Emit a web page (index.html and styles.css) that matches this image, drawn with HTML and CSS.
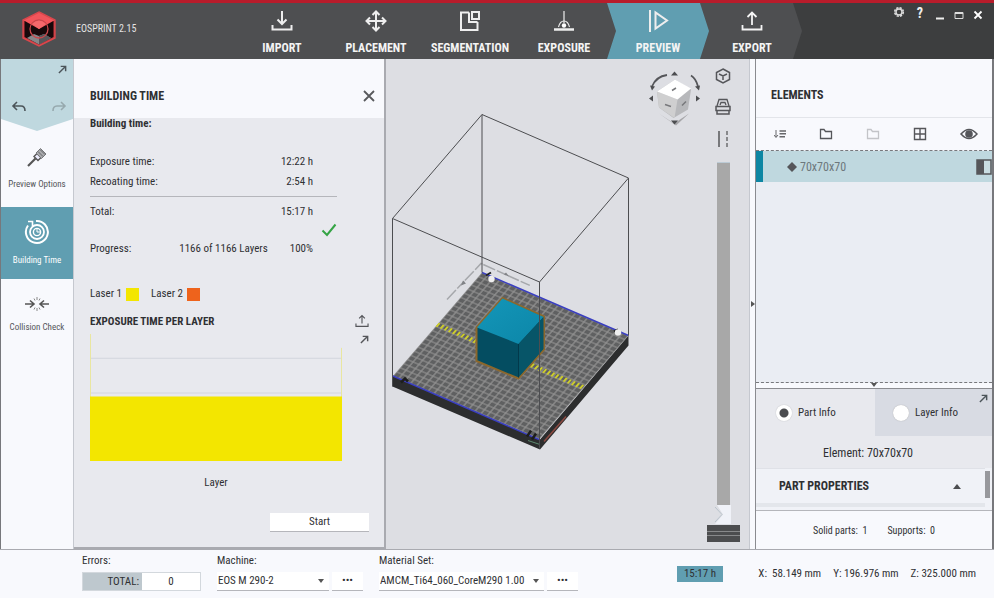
FILE: index.html
```html
<!DOCTYPE html>
<html lang="en">
<head>
<meta charset="utf-8">
<meta name="viewport" content="width=device-width, initial-scale=1">
<title>EOSPRINT 2.15</title>
<link rel="stylesheet" href="styles.css">
</head>
<body>
<svg class="defs" width="0" height="0" aria-hidden="true">
  <symbol id="pop" viewBox="0 0 10 10"><path d="M1 9 8 2M3 1.500H8.500V7" fill="none" stroke="currentColor" stroke-width="1.600"/></symbol>
  <symbol id="folder" viewBox="0 0 14 12"><path d="M1.500 10.500V1.500H5L6.500 3.500H12.500V10.500Z" fill="none" stroke="currentColor" stroke-width="1.300"/></symbol>
  <symbol id="upload" viewBox="0 0 22 22"><path d="M11 15V3M6.500 7 11 2.500 15.500 7M1.500 15V19.500H20.500V15" fill="none" stroke="currentColor" stroke-width="1.800"/></symbol>
</svg>
<div class="app">
  <header class="topbar">
    <div class="workflow">
      <div class="brand">
        <svg width="34" height="36" viewBox="0 0 34 36" aria-hidden="true">
          <path d="M17 1 33 9V27L17 35 1 27V9Z" fill="#c93a40"/>
          <path d="M2.500 10 31.500 10V26L17 33.500 2.500 26Z" fill="#17090b"/>
          <path d="M17 1 33 9 17 18 1 9Z" fill="#f2555b"/>
          <path d="M5 27 12 23 17 25 22 23 29 27 17 33.500Z" fill="#85878a"/>
          <path d="M17 25 22 23 29 27 17 33.500Z" fill="#55565a"/>
          <circle cx="17" cy="18" r="9" fill="none" stroke="#c9474c" stroke-width="1.300"/>
          <path d="M10 13Q17 6 24 13L17 18Z" fill="#f4686c"/>
          <path d="M17 1 33 9V27L17 35 1 27V9Z" fill="none" stroke="#d8474c" stroke-width="1.400"/>
        </svg>
        <span>EOSPRINT 2.15</span>
      </div>
      <nav class="steps">
        <a href="#import"><svg viewBox="0 0 22 22"><path d="M11 1V14M6.500 9.500 11 14 15.500 9.500M1.500 15V19.500H20.500V15"/></svg>IMPORT</a>
        <a href="#placement"><svg viewBox="0 0 22 22"><path d="M11 2V20M2 11H20M7.500 5 11 1.500 14.500 5M7.500 17 11 20.500 14.500 17M5 7.500 1.500 11 5 14.500M17 7.500 20.500 11 17 14.500"/></svg>PLACEMENT</a>
        <a href="#segmentation"><svg viewBox="0 0 22 22"><path d="M10 2.500H2V20H18.500V12M10 2.500V12H18.500M13 2H20V9H13Z"/></svg>SEGMENTATION</a>
        <a href="#exposure"><svg viewBox="0 0 22 22"><path d="M11 1V13" stroke-width="1.200"/><path d="M1 19.500H21" stroke-width="2.400"/><path d="M5.500 17Q7 11 11 11T16.500 17" stroke-width="1.100"/><circle cx="11" cy="15.500" r="2.200" fill="#fff" stroke="none"/></svg>EXPOSURE</a>
        <a href="#preview" class="active" aria-current="step"><svg viewBox="0 0 22 22"><path d="M3 0V22M8.500 2.500V18.500L20 10.500Z"/></svg>PREVIEW</a>
        <a href="#export"><svg><use href="#upload"/></svg>EXPORT</a>
      </nav>
    </div>
    <div class="window-controls">
      <button type="button" aria-label="Settings"><svg width="12" height="12" viewBox="0 0 12 12"><circle cx="6" cy="6" r="4.300" fill="none" stroke="#ddd" stroke-width="1.600" stroke-dasharray="2.300 1.080"/><circle cx="6" cy="6" r="3" fill="none" stroke="#ddd" stroke-width="1.400"/></svg></button>
      <button type="button" class="help" aria-label="Help">?</button>
      <button type="button" aria-label="Minimize"><svg width="10" height="14" viewBox="0 0 10 14"><path d="M1 12.500H9" stroke="#eee" stroke-width="2"/></svg></button>
      <button type="button" aria-label="Maximize"><svg width="10" height="14" viewBox="0 0 10 14"><path d="M1 6.500H9V12.500H1Z" fill="none" stroke="#ddd"/><path d="M1 7H9" stroke="#ddd" stroke-width="2"/></svg></button>
      <button type="button" aria-label="Close"><svg width="10" height="14" viewBox="0 0 10 14"><path d="M1.500 5.500 8.500 12.500M8.500 5.500 1.500 12.500" stroke="#fff" stroke-width="1.800"/></svg></button>
    </div>
  </header>

  <main class="workspace">
    <aside class="rail">
      <div class="history">
        <button type="button" class="pop" aria-label="Detach"><svg width="9" height="9"><use href="#pop"/></svg></button>
        <div class="undo-row">
          <button type="button" aria-label="Undo"><svg width="16" height="12" viewBox="0 0 16 12"><path d="M6 1 2 5 6 9M2 5H10Q14 5 14 10" fill="none" stroke="#4c555a" stroke-width="1.600"/></svg></button>
          <button type="button" aria-label="Redo" disabled><svg width="16" height="12" viewBox="0 0 16 12"><path d="M10 1 14 5 10 9M14 5H6Q2 5 2 10" fill="none" stroke="#97a9ae" stroke-width="1.600"/></svg></button>
        </div>
      </div>
      <button type="button" class="tool"><svg width="24" height="24" viewBox="0 0 24 24"><path d="M3 21 10.500 13.500" stroke="#555" stroke-width="2.200"/><path d="M9 11.500 12 8.500 16 12.500 13 15.500Z" fill="#eef" stroke="#555" stroke-width="1.400"/><path d="M11 8 15.500 3.500 21 9 16.500 13.500Z" fill="#aaabae" stroke="#77787b"/><path d="M13 6.500 18 11.500M15 4.500 20 9.500" stroke="#66676a"/></svg>Preview Options</button>
      <button type="button" class="tool selected"><svg width="26" height="26" viewBox="0 0 26 26" fill="none" stroke="#fff"><path d="M12 2A11 11 0 1 1 4 6.500" stroke-width="2"/><path d="M4 2.500H8.500V7" stroke-width="1.600"/><circle cx="13" cy="13" r="7" stroke-width="1.800"/><circle cx="13" cy="13" r="3.600" stroke-width="1.400"/><path d="M13 10V13H16"/></svg>Building Time</button>
      <button type="button" class="tool"><svg width="26" height="16" viewBox="0 0 26 16"><path d="M1 8H10M6 4.500 10 8 6 11.500M25 8H16M20 4.500 16 8 20 11.500" fill="none" stroke="#555" stroke-width="1.600"/><path d="M13 1V4M13 12V15M10 2.500 11 4.500M16 2.500 15 4.500M10 13.500 11 11.500M16 13.500 15 11.500" stroke="#888"/></svg>Collision Check</button>
    </aside>

    <section class="panel">
      <header class="panel-head">
        <h2>BUILDING TIME</h2>
        <button type="button" aria-label="Close panel"><svg width="14" height="14" viewBox="0 0 14 14"><path d="M2 2 12 12M12 2 2 12" stroke="#58595c" stroke-width="1.800"/></svg></button>
      </header>
      <div class="panel-body">
        <h3 class="cut">Building time:</h3>
        <dl class="times">
          <div><dt>Exposure time:</dt><dd>12:22 h</dd></div>
          <div><dt>Recoating time:</dt><dd>2:54 h</dd></div>
        </dl>
        <dl class="times total">
          <div><dt>Total:</dt><dd>15:17 h</dd></div>
        </dl>
        <div class="done"><svg width="16" height="14" viewBox="0 0 16 14"><path d="M1.500 7.500 6 12 14.500 1.500" fill="none" stroke="#35a445" stroke-width="2"/></svg></div>
        <div class="progress"><span>Progress:</span><span class="layers">1166 of 1166 Layers</span><span>100%</span></div>
        <div class="legend"><span>Laser 1<i class="yellow"></i></span><span>Laser 2<i class="orange"></i></span></div>
        <div class="chart-block">
          <div>
            <h3>EXPOSURE TIME PER LAYER</h3>
            <svg class="chart" viewBox="0 0 252 130" preserveAspectRatio="none" role="img" aria-label="Exposure time per layer">
              <path d="M0 26.500H252M0 61.500H252" stroke="#d3d6de"/>
              <path d="M.5 2V70M251.500 16V70" stroke="#e9e6a0"/>
              <path d="M0 65H252V130H0Z" fill="#f3e600"/>
            </svg>
            <p class="axis">Layer</p>
          </div>
          <div class="chart-tools">
            <button type="button" aria-label="Export chart"><svg width="14" height="14"><use href="#upload"/></svg></button>
            <button type="button" aria-label="Detach chart"><svg width="9" height="9"><use href="#pop"/></svg></button>
          </div>
        </div>
        <button type="button" class="start">Start</button>
      </div>
    </section>

    <section class="viewport">
      <svg class="scene" viewBox="386 60 363 489" role="img" aria-label="Build volume with one cube">
        <defs>
          <pattern id="grid" width="10" height="10" patternUnits="userSpaceOnUse"><rect width="10" height="10" fill="#929292"/><rect x="1" y="1" width="8" height="8" fill="#5f6061"/></pattern>
          <linearGradient id="top" x1="0" y1="0" x2="1" y2="1"><stop offset="0" stop-color="#1496b8"/><stop offset="1" stop-color="#0c86a8"/></linearGradient>
        </defs>
        <path d="M392.500 376 540 440 628.500 336V346L540 450 392.500 387Z" fill="#2c2d2e"/>
        <path d="M544 442 566 417" stroke="#8d4a42" stroke-width="1.500"/>
        <g transform="matrix(.586 .252 -.356 .414 482 273)">
          <rect width="250" height="250" fill="url(#grid)"/>
          <path d="M0 126H250" stroke="#cfcf28" stroke-width="9" stroke-dasharray="3 4"/>
        </g>
        <path d="M482 273 628.500 336M393 376.500 539 440" stroke="#3a3fc0" stroke-width="1.500"/>
        <path d="M401 383 405 379 408 382M527 437 531 431M532 440 536 434" stroke="#1d1d1d" stroke-width="2.500" fill="none"/>
        <path d="M486 276 491 273M614 332 618 330" stroke="#222" stroke-width="2"/>
        <circle cx="491.500" cy="279.500" r="3.200" fill="#eee"/><circle cx="618" cy="333" r="3.200" fill="#eee"/>
        <path d="M528 441 540 445" stroke="#5d8a70"/>
        <path d="M447 300 481 264 530 286" fill="none" stroke="#a5a7ab" stroke-width="1.500" stroke-dasharray="13 2 10 1"/>
        <path d="M461 286 463 281 466 284ZM504 275 509 277 506 273Z" fill="#808286"/>
        <path d="M502.500 298.500 544 317V350L518.500 379 476.500 361.500V328Z" fill="#044d61" stroke="#8b672c" stroke-width="2"/>
        <path d="M502.500 299 543.500 317.500 518.500 344.500 477 328Z" fill="url(#top)"/>
        <path d="M518.500 344.500 543.500 317.500V349.500L518.500 378Z" fill="#075568"/>
        <path d="M518.500 344.500V378" stroke="#02394b"/>
        <path d="M482 273V115L628.500 178.500V336M482 115 392.500 219V387M392.500 219 539.500 282.500 628.500 178.500M539.500 282.500V449" fill="none" stroke="#4c4d50"/>
        <g>
          <path d="M659 114 674 124 689 114 676 126Z" fill="#a5a5a8"/>
          <path d="M675 80 691 90 688 110 673.500 118.500 659 108 657 92Z" fill="#b7b8bb"/>
          <path d="M657 92 677.500 100 674.500 118.500 659 108Z" fill="#cfcfd0"/>
          <path d="M675 80 691 89 677.500 100 657 92Z" fill="#fff"/>
          <path d="M672 91 676 88.500M665 105 671 107M682 106 686 102" stroke="#77787b" stroke-width="1.500"/>
          <path d="M652 87Q656 77 667 75.500M691 76Q696 79 698 87" fill="none" stroke="#55565a" stroke-width="1.800"/>
          <path d="M671 76 674.500 72 678 76ZM671 121 674.500 125 678 121ZM653 96 649 99 653 102ZM696 96 700 99 696 102Z" fill="#4c4d50"/>
          <path d="M650 86 652 91 655 87ZM695 87 699 91 700 86Z" fill="#4c4d50"/>
        </g>
      </svg>
      <div class="view-tools">
        <button type="button" aria-label="Isometric view"><svg width="16" height="16" viewBox="0 0 16 16" fill="none" stroke="#55565a" stroke-width="1.500"><path d="M8 1 14.500 4.500V11.500L8 15 1.500 11.500V4.500ZM4 6 8 8 12 6M8 8V12"/></svg></button>
        <button type="button" aria-label="Machine view"><svg width="16" height="18" viewBox="0 0 16 18" fill="none" stroke="#55565a" stroke-width="1.500"><path d="M2 8 4 1.500H12L14 8M5 7 6 4.500H10L11 7" stroke-width="1.300"/><path d="M1 8.500H15V12.500H1ZM2 12.500V16H14V12.500"/></svg></button>
        <button type="button" aria-label="Section view"><svg width="14" height="18" viewBox="0 0 14 18"><path d="M3 1V17" stroke="#77787b" stroke-width="2"/><path d="M11 1V17" stroke="#88898c" stroke-width="2" stroke-dasharray="4 2"/></svg></button>
        <div class="layer-slider">
          <div class="track"></div>
          <svg width="18" height="19" viewBox="0 0 18 19"><path d="M3 0H17V19H1L9 9.500Z" fill="#f0f2f8"/><path d="M1 2 8 9.500 1 17" fill="none" stroke="#b9c3cc"/></svg>
        </div>
        <div class="layer-handle"></div>
      </div>
    </section>

    <div class="splitter" aria-hidden="true"><svg width="4" height="6" viewBox="0 0 4 6"><path d="M0 0 4 3 0 6Z" fill="#555"/></svg></div>

    <aside class="elements">
      <h2>ELEMENTS</h2>
      <div class="element-tools">
        <button type="button" aria-label="Sort"><svg width="12" height="10" viewBox="0 0 12 10"><path d="M2 1V8M0 6 2 8.500 4 6" fill="none" stroke="#66676a"/><path d="M5.500 2H12M5.500 4.800H12M5.500 7.800H11" stroke="#66676a" stroke-width="1.600"/></svg></button>
        <button type="button" aria-label="New folder"><svg width="14" height="12"><use href="#folder"/></svg></button>
        <button type="button" class="dim" aria-label="Open folder" disabled><svg width="14" height="12"><use href="#folder"/></svg></button>
        <button type="button" aria-label="Grid"><svg width="14" height="14" viewBox="0 0 14 14"><path d="M1.500 1.500H12.500V12.500H1.500ZM7 1.500V12.500M1.500 7H12.500" fill="none" stroke="#55565a" stroke-width="1.400"/></svg></button>
        <button type="button" aria-label="Visibility"><svg width="18" height="12" viewBox="0 0 18 12"><path d="M1 6Q9-3 17 6Q9 15 1 6Z" fill="none" stroke="#55565a" stroke-width="1.500"/><circle cx="9" cy="6" r="3.800" fill="#55565a"/></svg></button>
      </div>
      <ul class="element-list">
        <li><svg width="10" height="10" viewBox="0 0 10 10"><path d="M5 0 10 5 5 10 0 5Z" fill="#55565a"/></svg><span>70x70x70</span><svg class="shade" width="16" height="16" viewBox="0 0 16 16"><path d="M1 1H15V15H1Z" fill="#c9dde2" stroke="#55565a" stroke-width="1.500"/><path d="M1 1H8V15H1Z" fill="#55565a"/></svg></li>
      </ul>
      <div class="fold" aria-hidden="true"><svg width="6" height="4" viewBox="0 0 6 4"><path d="M0 0H6L3 4Z" fill="#555"/></svg></div>
      <div class="tabs">
        <label class="on"><input type="radio" name="info" checked>Part Info</label>
        <label class="off"><input type="radio" name="info">Layer Info</label>
        <button type="button" class="pop" aria-label="Detach info"><svg width="9" height="9"><use href="#pop"/></svg></button>
      </div>
      <p class="element-name">Element: 70x70x70</p>
      <div class="properties">
        <button type="button">PART PROPERTIES<svg width="8" height="5" viewBox="0 0 8 5"><path d="M0 5 4 0 8 5Z" fill="#4c4d50"/></svg></button>
        <span class="scrollbar"></span>
      </div>
      <p class="summary"><span>Solid parts:&nbsp; 1</span><span>Supports:&nbsp; 0</span></p>
    </aside>
  </main>

  <footer class="status">
    <div class="field errors"><span id="err">Errors:</span><div class="count"><b>TOTAL:</b><output aria-labelledby="err">0</output></div></div>
    <div class="field machine"><label for="machine">Machine:</label><div class="pick"><select id="machine"><option>EOS M 290-2</option></select><button type="button" aria-label="Machine options">•••</button></div></div>
    <div class="field material"><label for="material">Material Set:</label><div class="pick"><select id="material"><option>AMCM_Ti64_060_CoreM290 1.00</option></select><button type="button" aria-label="Material options">•••</button></div></div>
    <span class="badge">15:17 h</span>
    <div class="coords"><span>X:&nbsp; 58.149 mm</span><span>Y:&nbsp;196.976 mm</span><span>Z:&nbsp;325.000 mm</span></div>
  </footer>
</div>
</body>
</html>
```
FILE: styles.css
```css
* { box-sizing: border-box; }
body {
  margin: 0;
  font: 11px/20px "Liberation Sans Narrow", "Roboto Condensed", "Open Sans Condensed", Roboto, sans-serif;
  color: #2f3033;
}
h2, h3, p, dl, dd, ul { margin: 0; padding: 0; }
h2 { font-size: 12px; line-height: 20px; }
h3 { font-size: 11px; line-height: 20px; }
button {
  padding: 0;
  border: 0;
  background: none;
  color: inherit;
  font: inherit;
}
svg { display: block; flex: none; }
.defs { position: absolute; }
.app {
  display: grid;
  grid-template-rows: 59px 1fr 49px;
  min-height: 100vh;
  border-bottom: 1px solid #77787c;
}

/* Top bar */
.topbar {
  display: flex;
  justify-content: space-between;
  background: #3d3e3f;
  border-top: 3px solid #b81c2b;
}
.workflow {
  display: flex;
  padding-right: 3px;
  background: #4e4f51;
  clip-path: polygon(0 0, calc(100% - 9px) 0, 100% 50%, calc(100% - 9px) 100%, 0 100%);
}
.brand {
  display: flex;
  align-items: center;
  gap: 20px;
  width: 235px;
  padding: 0 0 4px 22px;
  color: #e4e4e4;
  font-size: 10px;
}
.steps { display: flex; }
.steps a {
  position: relative;
  display: flex;
  flex-direction: column;
  align-items: center;
  width: 94px;
  padding-top: 7px;
  gap: 6px;
  color: #f4f4f4;
  font-size: 12px;
  font-weight: bold;
  line-height: 20px;
  text-decoration: none;
}
.steps svg {
  position: relative;
  width: 22px;
  height: 22px;
  fill: none;
  stroke: #eee;
  stroke-width: 2;
}
.steps .active { isolation: isolate; }
.steps .active::before {
  content: "";
  position: absolute;
  inset: 0 -4px;
  z-index: -1;
  background: #609eb1;
  clip-path: polygon(0 0, calc(100% - 9px) 0, 100% 50%, calc(100% - 9px) 100%, 0 100%, 9px 50%);
}
.window-controls {
  display: flex;
  align-items: flex-start;
  gap: 9px;
  padding: 3px 11px 0 0;
}
.window-controls .help {
  width: 12px;
  color: #eee;
  font-size: 14px;
  font-weight: bold;
  line-height: 14px;
}

/* Workspace */
.workspace { display: flex; background: #f8f9fd; }
.rail {
  display: flex;
  flex-direction: column;
  width: 74px;
  border-left: 1px solid #77787c;
  border-right: 1px solid #c5c8cf;
}
.history {
  display: flex;
  flex-direction: column;
  justify-content: space-between;
  height: 72px;
  padding: 6px 6px 18px 10px;
  background: #bfd8df;
  clip-path: polygon(0 0, 100% 0, 100% 60px, 50% 100%, 0 60px);
}
.pop { align-self: flex-end; color: #4c555a; }
.undo-row { display: flex; justify-content: space-between; }
.tool {
  display: flex;
  flex-direction: column;
  align-items: center;
  justify-content: center;
  height: 72px;
  gap: 5px;
  padding-top: 3px;
  color: #55565a;
  font-size: 9px;
}
.tool:nth-of-type(1) { height: 76px; padding: 0; }
.tool.selected { background: #609eb1; color: #fff; }

.panel {
  display: flex;
  flex-direction: column;
  width: 312px;
  background: #e8e9ee;
  border-right: 2px solid #a9aab0;
  border-bottom: 2px solid #a9aab0;
}
.panel-head {
  display: flex;
  align-items: center;
  justify-content: space-between;
  height: 59px;
  padding: 14px 8px 0 16px;
  background: #f8f9fd;
}
.panel-body {
  display: flex;
  flex-direction: column;
  padding: 0 15px 15px 16px;
}
.cut { line-height: 12px; margin-bottom: 22px; }
.times { margin-right: 32px; padding-right: 24px; }
.times div { display: flex; justify-content: space-between; }
.total { margin-top: 4px; padding-top: 5px; border-top: 1px solid #b5b6bb; }
.done { align-self: flex-end; margin-right: 32px; padding-top: 1px; height: 17px; }
.progress { display: flex; margin-right: 56px; }
.layers { margin: 0 22px 0 auto; }
.legend { display: flex; gap: 12px; margin: 25px 0 8px; }
.legend span { display: flex; align-items: center; gap: 4px; }
.legend i { width: 13px; height: 13px; }
.yellow { background: #f3e600; }
.orange { background: #ee631c; }
.chart-block { display: grid; grid-template-columns: 1fr 27px; }
.chart { width: 100%; height: 129px; }
.axis { margin: 12px 0 20px; text-align: center; }
.chart-tools {
  display: flex;
  flex-direction: column;
  align-items: flex-end;
  gap: 7px;
  padding-top: 2px;
  color: #55565a;
}
.start {
  align-self: flex-end;
  width: 99px;
  height: 19px;
  background: #fff;
  border-bottom: 1px solid #b5b6bb;
  line-height: 18px;
}

.viewport { position: relative; flex: 1; min-width: 0; background: #dddee3; }
.scene { position: absolute; inset: 0; width: 100%; height: 100%; }
.view-tools {
  position: absolute;
  top: 9px;
  right: 9px;
  bottom: 7px;
  display: flex;
  flex-direction: column;
  align-items: center;
  width: 34px;
  gap: 14px;
}
.layer-slider {
  display: flex;
  flex: 1;
  flex-direction: column;
  align-items: center;
  margin-bottom: -13px;
}
.track { flex: 1; width: 13px; background: #a8a8a8; border-top: 1px solid #bccbd6; }
.layer-handle {
  width: 33px;
  height: 17px;
  background: linear-gradient(#4c4d4f 6px, #88898b 6px 7px, #4c4d4f 7px 10px, #88898b 10px 11px, #4c4d4f 11px);
}
.splitter {
  display: flex;
  align-items: center;
  justify-content: center;
  width: 7px;
  border-left: 1px solid #c5c8cf;
  border-right: 1px solid #8a8b90;
}

/* Elements panel */
.elements {
  display: flex;
  flex-direction: column;
  width: 238px;
  border-right: 2px solid #77787c;
}
.elements h2 { padding: 26px 15px 12px; border-bottom: 1px solid #e3e5ea; }
.element-tools {
  display: flex;
  align-items: center;
  justify-content: space-between;
  height: 32px;
  padding: 0 14px 0 18px;
  color: #55565a;
}
.dim { color: #c3c4c8; }
.element-list {
  flex: 1;
  background: #eaedf3;
  border: 1px dashed #77787c;
  border-width: 1px 0;
  list-style: none;
}
.element-list li {
  display: flex;
  align-items: center;
  gap: 3px;
  height: 31px;
  padding-left: 24px;
  background: #bfd8df;
  border-left: 7px solid #0d86a3;
  color: #6d777c;
  font-size: 12px;
}
.shade { margin-left: auto; }
.fold { display: flex; justify-content: center; height: 6px; border-bottom: 1px solid #8a8b90; }
.tabs { position: relative; display: flex; height: 47px; background: #e8e9ee; }
.tabs label {
  display: flex;
  flex: 1;
  align-items: center;
  gap: 6px;
  padding-left: 20px;
}
.tabs .off { padding-left: 18px; background: #d8dbe3; }
.tabs .pop { position: absolute; top: 5px; right: 4px; }
input[type="radio"] {
  appearance: none;
  width: 16px;
  height: 16px;
  margin: 0;
  border-radius: 50%;
  background: #fff;
  box-shadow: 0 0 1px #999;
}
input[type="radio"]:checked { background: radial-gradient(circle, #4c4d50 4px, #fff 5px); }
.element-name {
  padding: 7px 12px 5px 0;
  background: #e8e9ee;
  font-size: 12px;
  text-align: center;
}
.properties {
  display: flex;
  justify-content: space-between;
  height: 43px;
  padding-right: 2px;
  background: #f0f2f7;
  border-bottom: 1px solid #b5b6bb;
}
.properties button {
  display: flex;
  flex: 1;
  align-items: center;
  justify-content: space-between;
  height: 39px;
  padding: 0 24px 0 23px;
  border-top: 1px solid #dfe1e7;
  border-bottom: 4px solid #e3e6eb;
  font-size: 12px;
  font-weight: bold;
}
.scrollbar { width: 5px; height: 27px; margin-top: 3px; background: #97989c; }
.summary {
  display: flex;
  justify-content: center;
  gap: 20px;
  padding: 10px 0 8px;
  font-size: 10px;
}

/* Status bar */
.status {
  display: flex;
  align-items: flex-start;
  padding-left: 82px;
  background: #f8f9fd;
  border-top: 1px solid #a9aab0;
}
.field { display: flex; flex-direction: column; padding-top: 3px; line-height: 16px; }
.field > :first-child { margin-bottom: 3px; }
.errors { width: 135px; }
.machine { width: 162px; }
.material { width: 298px; }
.count {
  display: flex;
  width: 119px;
  height: 19px;
  border: 1px solid #d3d8dd;
  line-height: 18px;
}
.count b { width: 59px; padding-right: 3px; background: #bec8ce; text-align: right; font-weight: normal; }
.count output { flex: 1; background: #fff; text-align: center; }
.pick { display: flex; gap: 3px; }
.pick select {
  width: 112px;
  height: 19px;
  padding: 0 14px 0 1px;
  appearance: none;
  border: 0;
  border-bottom: 1px solid #b5b6bb;
  border-radius: 0;
  background: #fff url("data:image/svg+xml,%3Csvg xmlns='http://www.w3.org/2000/svg' viewBox='0 0 6 4'%3E%3Cpath d='M0 0H6L3 4Z' fill='%23555'/%3E%3C/svg%3E") no-repeat right 5px center / 6px 4px;
  color: inherit;
  font: inherit;
}
.material select { width: 165px; }
.pick button {
  width: 31px;
  background: #fff;
  border-bottom: 1px solid #b5b6bb;
}
.badge {
  width: 46px;
  margin-top: 16px;
  background: #609eb1;
  line-height: 16px;
  text-align: center;
}
.coords {
  display: flex;
  gap: 12px;
  margin: 14px 18px 0 auto;
  white-space: nowrap;
}
```
